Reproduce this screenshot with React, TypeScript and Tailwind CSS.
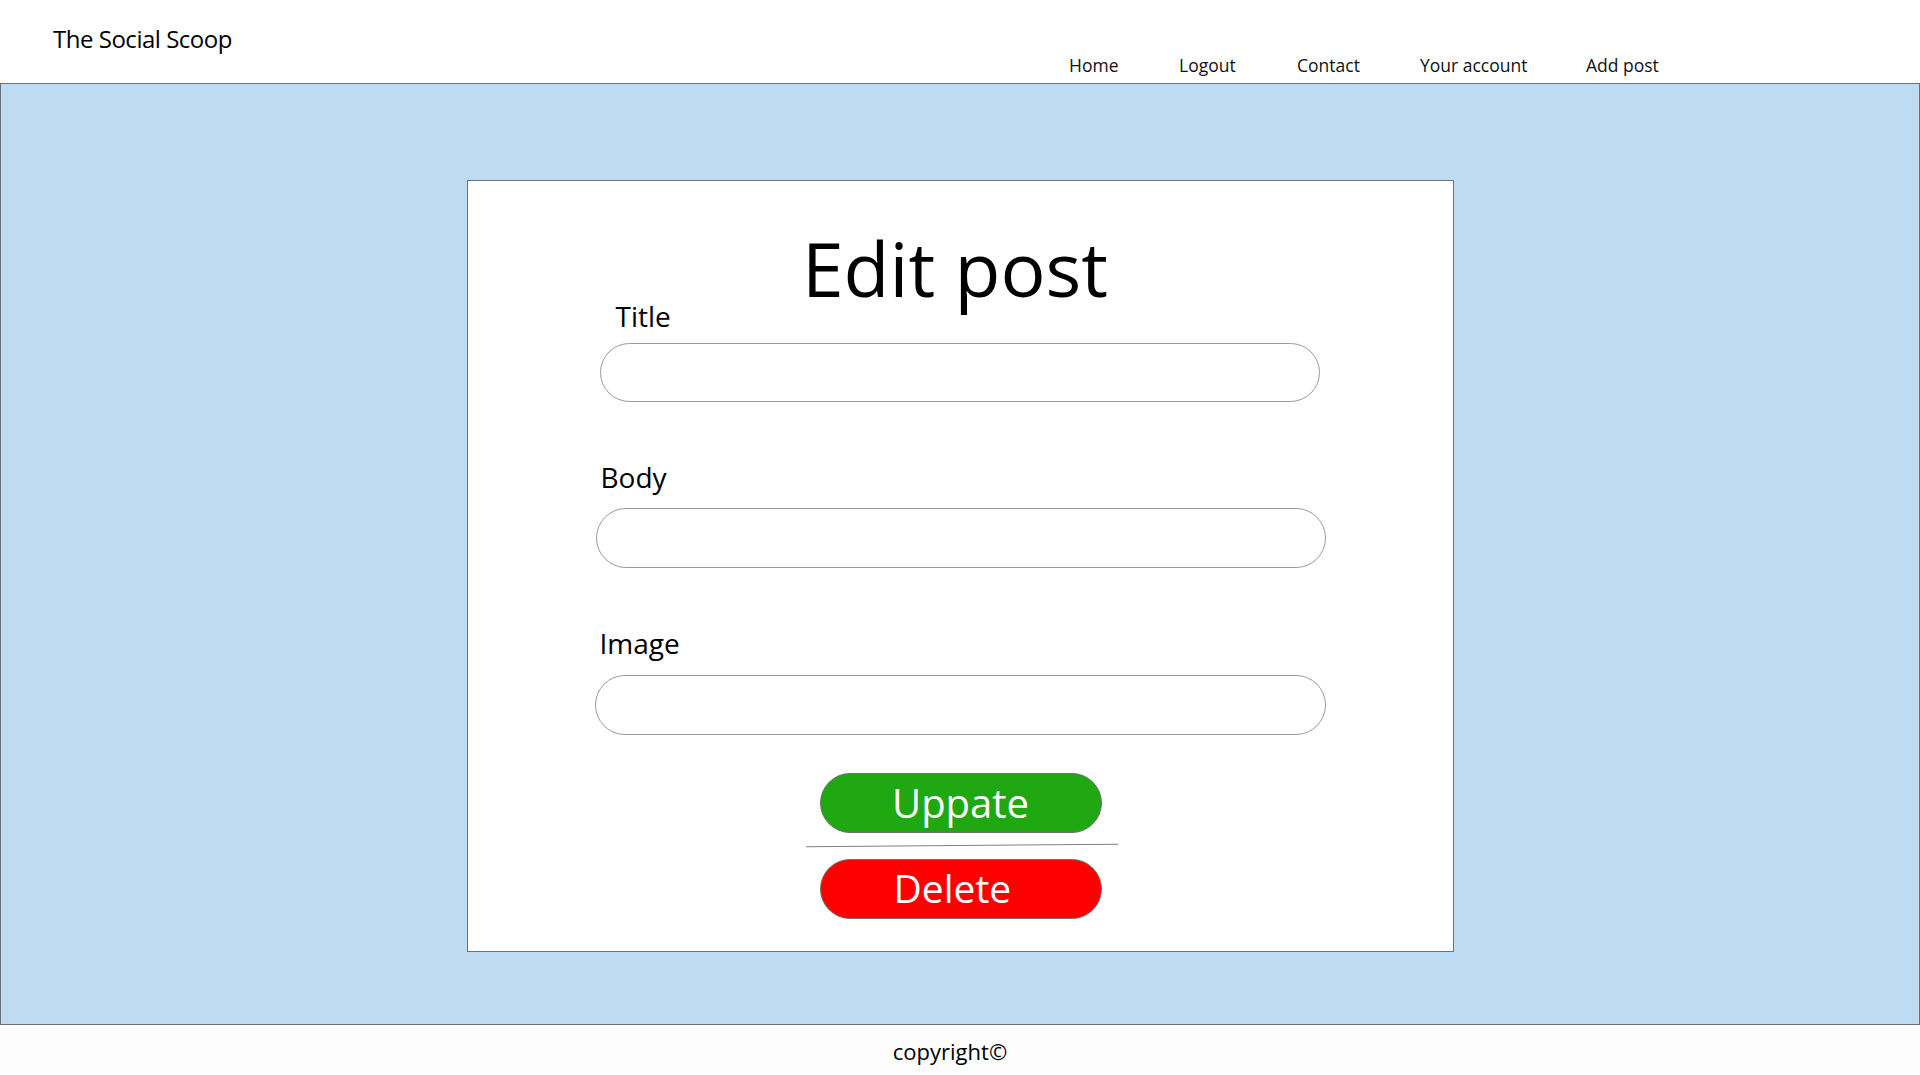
import React from "react";

const font = { fontFamily: '"Open Sans", "Noto Sans", sans-serif' };

export default function App() {
  return (
    <div className="w-[1920px] h-[1075px] bg-white flex flex-col overflow-hidden text-black" style={font}>
      <header className="h-[83px] flex">
        <div className="w-[1069px] pl-[53px] pt-[27px] text-[24px] leading-none tracking-[-0.02em]">The Social Scoop</div>
        <nav className="flex self-end pb-[9px] text-[17.5px] leading-none text-[#111]">
          <a className="w-[110px]">Home</a>
          <a className="w-[118px]">Logout</a>
          <a className="w-[123px]">Contact</a>
          <a className="w-[166px]">Your account</a>
          <a>Add post</a>
        </nav>
      </header>
      <main className="h-[942px] bg-[#bddbf3] border border-[#707070] flex flex-col items-center">
        <div className="mt-[96px] w-[987px] h-[772px] bg-white border border-[#707070] flex flex-col">
          <h1 className="mt-[57px] text-[75px] leading-[60px] text-center pr-[10px]">Edit post</h1>
          <label className="mt-[4px] ml-[148px] text-[28px] leading-[28px]">Title</label>
          <div className="mt-[13px] ml-[132px] w-[720px] h-[59px] rounded-full border border-[#9a9a9a]" />
          <label className="mt-[61px] ml-[133px] text-[28px] leading-[28px]">Body</label>
          <div className="mt-[17px] ml-[128px] w-[730px] h-[60px] rounded-full border border-[#9a9a9a]" />
          <label className="mt-[61px] ml-[132px] text-[28px] leading-[28px]">Image</label>
          <div className="mt-[18px] ml-[127px] w-[731px] h-[60px] rounded-full border border-[#9a9a9a]" />
          <button className="mt-[38px] ml-[352px] w-[282px] h-[60px] rounded-full bg-[#1fa812] border border-[#707070] text-white text-[40px] leading-none flex items-center justify-center">
            Uppate
          </button>
          <div className="mt-[12px] ml-[338px] w-[312px] h-[1px] bg-[#808080] rotate-[-0.5deg]" />
          <button className="mt-[13px] ml-[352px] w-[282px] h-[60px] rounded-full bg-[#ff0000] border border-[#707070] text-white text-[39px] leading-none flex items-center justify-start pl-[73px] pb-[3px]">
            Delete
          </button>
        </div>
      </main>
      <footer className="h-[50px] bg-[#fdfdfd] flex justify-center pr-[20px] pt-[15px] text-[22px] leading-none">
        copyright©
      </footer>
    </div>
  );
}
